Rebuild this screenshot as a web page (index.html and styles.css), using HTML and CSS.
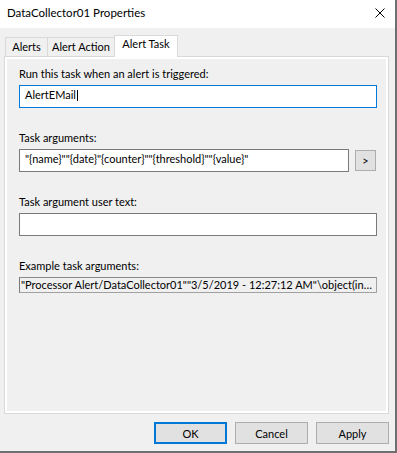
FILE: index.html
```html
<!DOCTYPE html>
<html lang="en">
<head>
    <meta charset="UTF-8">
    <meta name="viewport" content="width=device-width, initial-scale=1.0">
    <title>DataCollector01 Properties</title>
    <link rel="stylesheet" href="styles.css">
</head>
<body>

<!-- Properties dialog -->
<div class="window">
    <div class="titlebar">
        <span class="title">DataCollector01 Properties</span>
        <svg class="close-icon" width="10" height="10" viewBox="0 0 10 10">
            <path d="M0.5 0.5 L9.5 9.5 M9.5 0.5 L0.5 9.5" stroke="#000" stroke-width="1" fill="none"/>
        </svg>
    </div>

    <div class="tabs">
        <div class="tab tab-alerts">Alerts</div>
        <div class="tab tab-action">Alert Action</div>
        <div class="tab tab-task active">Alert Task</div>
    </div>

    <div class="panel">
        <div class="page">
            <div class="field">
                <label>Run this task when an alert is triggered:</label>
                <div class="textbox focused">AlertEMail<span class="caret"></span></div>
            </div>

            <div class="field">
                <label>Task arguments:</label>
                <div class="field-row">
                    <div class="textbox textbox-short">"{name}""{date}"{counter}""{threshold}""{value}"</div>
                    <button class="btn btn-small">&gt;</button>
                </div>
            </div>

            <div class="field">
                <label>Task argument user text:</label>
                <div class="textbox"></div>
            </div>

            <div class="field">
                <label>Example task arguments:</label>
                <div class="readonly">"Processor Alert/DataCollector01""3/5/2019 - 12:27:12 AM"\object(instance)"processor time"</div>
            </div>
        </div>
    </div>

    <div class="buttons">
        <button class="btn btn-default">OK</button>
        <button class="btn">Cancel</button>
        <button class="btn">Apply</button>
    </div>
</div>

</body>
</html>
```

FILE: styles.css
```css
* {
    box-sizing: border-box;
}

body {
    margin: 0;
    font-family: Lato, "Liberation Sans", sans-serif;
    font-size: 11px;
    color: #000000;
    background-color: #ffffff;
}

/* window frame */
.window {
    width: 397px;
    height: 453px;
    background-color: #f0f0f0;
    border-right: 2px solid #6f6f6f;
    border-bottom: 2px solid #6f6f6f;
    display: flex;
    flex-direction: column;
}

.titlebar {
    height: 28px;
    flex: none;
    background-color: #ffffff;
    display: flex;
    justify-content: space-between;
    align-items: flex-start;
    padding: 0 10px 0 7px;
}

.title {
    font-size: 11.5px;
    line-height: 26px;
}

.close-icon {
    margin-top: 8px;
}

/* tabs */
.tabs {
    height: 28px;
    flex: none;
    display: flex;
    align-items: flex-end;
    padding-left: 5px;
    position: relative;
    z-index: 1;
}

.tab {
    height: 19px;
    line-height: 18px;
    text-align: center;
    border: 1px solid #d9d9d9;
    border-bottom: none;
    background-color: #f0f0f0;
}

.tab-alerts {
    width: 43px;
}

.tab-action {
    width: 68px;
    margin-left: -1px;
}

.tab-task {
    width: 64px;
    margin-left: -1px;
}

.tab.active {
    height: 22px;
    line-height: 16px;
    background-color: #ffffff;
    margin-bottom: -1px;
}

/* tab page */
.panel {
    height: 358px;
    flex: none;
    margin-left: 4px;
    width: 385px;
    border: 1px solid #d9d9d9;
    background-color: #ffffff;
    padding: 2px;
}

.page {
    height: 100%;
    background-color: #f0f0f0;
    padding: 7px 9px 0 12px;
    display: flex;
    flex-direction: column;
    gap: 22px;
}

.field label {
    display: block;
    line-height: 16px;
    margin-bottom: 3px;
}

.field-row {
    display: flex;
    align-items: flex-start;
    gap: 6px;
}

.textbox {
    height: 23px;
    line-height: 18px;
    padding: 0 5px;
    background-color: #ffffff;
    border: 1px solid #7a7a7a;
    white-space: nowrap;
    overflow: hidden;
}

.textbox.focused {
    border-color: #0078d7;
}

.textbox-short {
    width: 330px;
}

.caret {
    display: inline-block;
    width: 1px;
    height: 11px;
    margin-left: 1px;
    background-color: #000000;
    vertical-align: -2px;
}

.readonly {
    height: 16px;
    line-height: 14px;
    padding: 0 1px;
    border: 1px solid #a0a0a0;
    border-left-color: #7a7a7a;
    border-top-color: #8a8a8a;
    white-space: nowrap;
    overflow: hidden;
    text-overflow: ellipsis;
}

/* buttons */
.buttons {
    display: flex;
    justify-content: flex-end;
    gap: 8px;
    padding: 8px 6px 0 0;
}

.btn {
    width: 73px;
    height: 22px;
    font-family: inherit;
    font-size: 11px;
    color: #000000;
    background-color: #e1e1e1;
    border: 1px solid #adadad;
    padding: 0;
}

.btn-default {
    border: 2px solid #0078d7;
}

.btn-small {
    width: 21px;
    height: 21px;
    margin-top: 1px;
}
```
